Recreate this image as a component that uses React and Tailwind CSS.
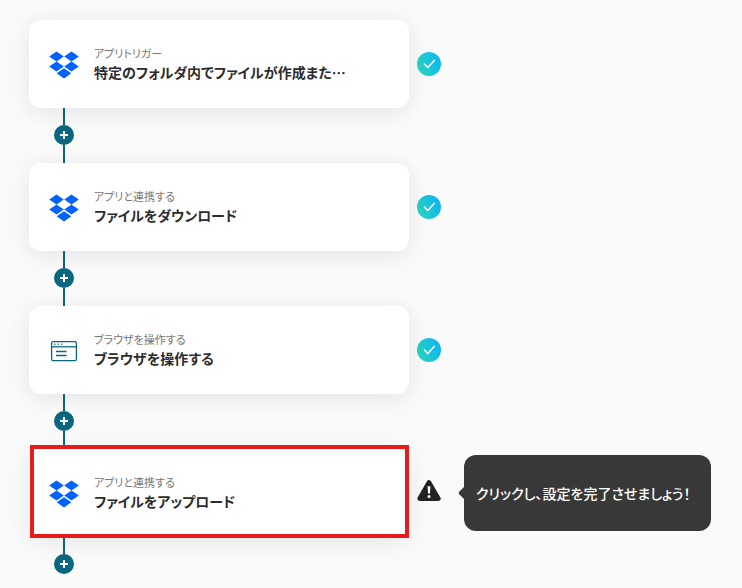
const STEPS = [
  { id: 'trigger', icon: 'dropbox', label: 'アプリトリガー', title: '特定のフォルダ内でファイルが作成また…', done: true },
  { id: 'download', icon: 'dropbox', label: 'アプリと連携する', title: 'ファイルをダウンロード', done: true },
  { id: 'browser', icon: 'browser', label: 'ブラウザを操作する', title: 'ブラウザを操作する', done: true },
  { id: 'upload', icon: 'dropbox', label: 'アプリと連携する', title: 'ファイルをアップロード', done: false },
];

function DropboxIcon() {
  return (
    <svg viewBox="0 0 30 30" className="w-[30px] h-[30px] shrink-0" fill="#0062ff" aria-hidden="true">
      <path d="M7.5 2.4 14.8 7.4 7.5 12.4 0.2 7.4ZM22.5 2.4 29.8 7.4 22.5 12.4 15.2 7.4ZM7.5 12.6 14.8 17.6 7.5 22.6 0.2 17.6ZM22.5 12.6 29.8 17.6 22.5 22.6 15.2 17.6ZM15 19.2 22.3 24.2 15 29.4 7.7 24.2Z" />
    </svg>
  );
}

function BrowserIcon() {
  return (
    <svg viewBox="0 0 30 30" className="w-[30px] h-[30px] shrink-0" fill="none" stroke="#0b6780" aria-hidden="true">
      <rect x="2.6" y="6.6" width="24.8" height="19" rx="1.6" strokeWidth="1.3" />
      <path d="M2.6 11.8H27.4" strokeWidth="1.3" />
      <path d="M5 9.2h1.6M8.4 9.2h1.6M11.8 9.2h1.6" strokeWidth="1.4" opacity="0.75" />
      <path d="M7 16.5H17.6M7 20.5H17.6" strokeWidth="1.3" />
    </svg>
  );
}

function DoneIcon() {
  return (
    <svg viewBox="0 0 24 24" className="w-6 h-6 shrink-0" role="img" aria-label="完了">
      <defs>
        <linearGradient id="done" x1="0" y1="0.7" x2="1" y2="0.3">
          <stop offset="0" stopColor="#2bd6bb" />
          <stop offset="1" stopColor="#0cb4f5" />
        </linearGradient>
      </defs>
      <circle cx="12" cy="12" r="12" fill="url(#done)" />
      <path d="M7.4 12 10.8 15.6 17.2 8.4" fill="none" stroke="#fff" strokeWidth="1.5" strokeLinecap="round" strokeLinejoin="round" />
    </svg>
  );
}

function WarningIcon() {
  return (
    <svg viewBox="0 0 24 26" className="w-6 h-[26px] shrink-0" role="img" aria-label="未設定">
      <path d="M12 2.4 21.4 18.6H2.6Z" fill="#222" stroke="#222" strokeWidth="4.6" strokeLinejoin="round" />
      <path d="M10.6 6.2h2.8l-.4 7.4h-2Z" fill="#fff" />
      <circle cx="12" cy="16.6" r="1.5" fill="#fff" />
    </svg>
  );
}

function AddStep({ last }) {
  return (
    <div className="w-[70px] flex flex-col items-center">
      <span className="w-0.5 h-[17px] bg-[#0b6780]" />
      <button aria-label="追加" className="w-5 h-5 rounded-full bg-[#0b6780] flex items-center justify-center">
        <svg viewBox="0 0 8 8" className="w-2 h-2" stroke="#fff" strokeWidth="2" aria-hidden="true">
          <path d="M4 0V8M0 4H8" />
        </svg>
      </button>
      {!last && <span className="w-0.5 h-[18px] bg-[#0b6780]" />}
    </div>
  );
}

function Step({ step }) {
  return (
    <div className="flex items-center">
      <div className="relative flex-1 min-w-0 max-w-[380px]">
        <button className="w-full h-[88px] pl-5 pr-4 flex items-center gap-[15px] rounded-xl bg-white text-left
          shadow-[0_4px_24px_rgba(0,0,0,0.09)]">
          {step.icon === 'dropbox' ? <DropboxIcon /> : <BrowserIcon />}
          <span className="min-w-0 flex flex-col">
            <span className="text-[11px] leading-4 text-[#777]">{step.label}</span>
            <span className="text-sm leading-[22px] font-bold text-[#2c2c2c] truncate">{step.title}</span>
          </span>
        </button>
        {!step.done && (
          <span className="absolute -top-1 -bottom-px left-px right-0 border-4 border-[#e61c1c] pointer-events-none" />
        )}
      </div>
      <div className="ml-2 flex items-center">
        {step.done ? <DoneIcon /> : <WarningIcon />}
        {!step.done && (
          <div role="tooltip" className="relative ml-[23px] pl-3 pr-5 h-[76px] flex items-center rounded-xl
            bg-[#383838] text-sm font-medium text-white whitespace-nowrap">
            <svg viewBox="0 0 6 12" className="absolute right-full top-1/2 -translate-y-1/2 w-1.5 h-3" fill="#383838" aria-hidden="true">
              <path d="M6 0 1.2 4.8Q0.2 6 1.2 7.2L6 12Z" />
            </svg>
            クリックし、設定を完了させましょう！
          </div>
        )}
      </div>
    </div>
  );
}

function App() {
  return (
    <main className="min-h-screen bg-[#fafafa] pt-5 pl-[29px] pr-6 overflow-hidden
      font-['Noto_Sans_CJK_JP',sans-serif] [font-feature-settings:'palt']" lang="ja">
      {STEPS.map((step, i) => (
        <div key={step.id}>
          <Step step={step} />
          <AddStep last={i === STEPS.length - 1} />
        </div>
      ))}
    </main>
  );
}

export default App;
